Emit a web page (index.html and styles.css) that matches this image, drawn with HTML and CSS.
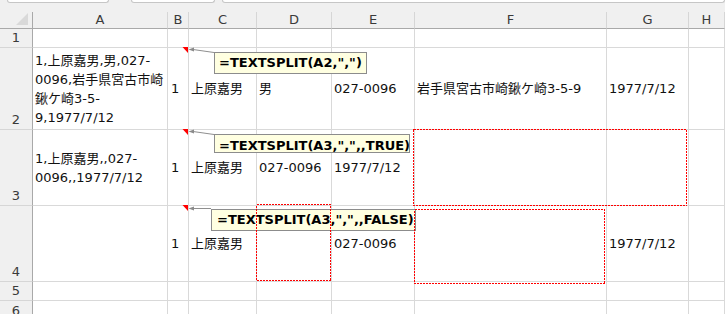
FILE: index.html
```html
<!DOCTYPE html>
<html lang="ja">
<head>
<meta charset="utf-8">
<title>TEXTSPLIT</title>
<link rel="stylesheet" href="styles.css">
</head>
<body>
<div class="app">
  <div class="topbar">
    <div class="tb tb-name"></div>
    <div class="tb tb-fx"></div>
    <div class="tb tb-formula"></div>
  </div>
  <div class="sheet">
    <div class="corner"><svg width="33" height="16" viewBox="0 0 33 16"><polygon points="28,1 28,13 16,13" fill="#d9d9d9"/></svg></div>
    <div class="ch">A</div><div class="ch">B</div><div class="ch">C</div><div class="ch">D</div><div class="ch">E</div><div class="ch">F</div><div class="ch">G</div><div class="ch">H</div>

    <div class="rh">1</div>
    <div class="cell"></div><div class="cell"></div><div class="cell"></div><div class="cell"></div><div class="cell"></div><div class="cell"></div><div class="cell"></div><div class="cell"></div>

    <div class="rh">2</div>
    <div class="cell wrap">1,上原嘉男,男,027-<br>0096,岩手県宮古市崎<br>鍬ケ崎3-5-<br>9,1977/7/12</div>
    <div class="cell num">1</div>
    <div class="cell">上原嘉男</div>
    <div class="cell">男</div>
    <div class="cell">027-0096</div>
    <div class="cell">岩手県宮古市崎鍬ケ崎3-5-9</div>
    <div class="cell">1977/7/12</div>
    <div class="cell"></div>

    <div class="rh">3</div>
    <div class="cell wrap">1,上原嘉男,,027-<br>0096,,1977/7/12</div>
    <div class="cell num">1</div>
    <div class="cell">上原嘉男</div>
    <div class="cell">027-0096</div>
    <div class="cell">1977/7/12</div>
    <div class="cell"></div>
    <div class="cell"></div>
    <div class="cell"></div>

    <div class="rh">4</div>
    <div class="cell"></div>
    <div class="cell num">1</div>
    <div class="cell">上原嘉男</div>
    <div class="cell"></div>
    <div class="cell">027-0096</div>
    <div class="cell"></div>
    <div class="cell">1977/7/12</div>
    <div class="cell"></div>

    <div class="rh">5</div>
    <div class="cell"></div><div class="cell"></div><div class="cell"></div><div class="cell"></div><div class="cell"></div><div class="cell"></div><div class="cell"></div><div class="cell"></div>

    <div class="rh">6</div>
    <div class="cell"></div><div class="cell"></div><div class="cell"></div><div class="cell"></div><div class="cell"></div><div class="cell"></div><div class="cell"></div><div class="cell"></div>
  </div>

  <div class="callout c1">=TEXTSPLIT(A2,",")</div>
  <div class="callout c2">=TEXTSPLIT(A3,",",,TRUE)</div>
  <div class="callout c3">=TEXTSPLIT(A3,",",,FALSE)</div>

  <svg class="overlay" width="725" height="314" viewBox="0 0 725 314">
    <g fill="#ff0000">
      <polygon points="182.5,47 188,47 188,53"/>
      <polygon points="182.5,129 188,129 188,135"/>
      <polygon points="182.5,205 188,205 188,211"/>
    </g>
    <g stroke="#8f8f8f" stroke-width="1" fill="none">
      <line x1="193" y1="49.5" x2="214" y2="52.5"/>
      <line x1="193" y1="131.5" x2="214" y2="134.5"/>
      <line x1="193" y1="208.5" x2="211" y2="208.5"/>
    </g>
    <g fill="#8a8a8a">
      <polygon points="188.5,49.5 194,47.5 194,51.5"/>
      <polygon points="188.5,131.5 194,129.5 194,133.5"/>
      <polygon points="188.5,208.5 194,206.5 194,210.5"/>
    </g>
    <g stroke="#ff0000" stroke-width="1" fill="none" stroke-dasharray="2 1" shape-rendering="crispEdges">
      <rect x="413.5" y="129.5" width="273" height="76"/>
      <rect x="414.5" y="209.5" width="190" height="74"/>
      <rect x="256.5" y="204.5" width="74" height="76"/>
    </g>
  </svg>
</div>
</body>
</html>
```

FILE: styles.css
```css
html, body {
  margin: 0;
  padding: 0;
  background: #f0f0f0;
}

.app {
  position: relative;
  width: 725px;
  height: 314px;
  overflow: hidden;
  font-family: "DejaVu Sans", "Noto Sans CJK JP", sans-serif;
  font-size: 13px;
  color: #000;
}

.topbar {
  height: 12px;
  display: flex;
  align-items: flex-start;
}

.tb {
  height: 2px;
  background: #fff;
  border: 1px solid #c6c6c6;
  border-top: none;
  border-radius: 0 0 4px 4px;
}

.tb-name { width: 100px; margin-left: 7px; }
.tb-fx { width: 82px; margin-left: 22px; }
.tb-formula { flex: 1; margin-left: 7px; }

.sheet {
  display: grid;
  grid-template-columns: 33px 135px 21px 68px 75px 83px 192px 82px 1fr;
  grid-template-rows: 17px 19px 82px 76px 76px 19px 20px;
}

.sheet > div {
  box-sizing: border-box;
}

.corner {
  background: #f0f0f0;
  border-right: 1px solid #a9a9a9;
  border-bottom: 1px solid #a9a9a9;
  line-height: 0;
}

.ch {
  background: #f0f0f0;
  border-right: 1px solid #d6d6d6;
  border-bottom: 1px solid #a9a9a9;
  display: flex;
  align-items: center;
  justify-content: center;
  color: #3a3a3a;
  line-height: 16px;
}

.rh {
  background: #f0f0f0;
  border-right: 1px solid #a9a9a9;
  border-bottom: 1px solid #d6d6d6;
  display: flex;
  align-items: flex-end;
  justify-content: center;
  color: #3a3a3a;
  line-height: 18px;
}

.cell {
  background: #fff;
  border-right: 1px solid #d9d9d9;
  border-bottom: 1px solid #d9d9d9;
  display: flex;
  align-items: center;
  padding-left: 2px;
  white-space: nowrap;
  line-height: 19px;
  color: #111;
}

.cell.num {
  padding-left: 3px;
}

.callout {
  position: absolute;
  box-sizing: border-box;
  background: #ffffe1;
  border: 1px solid #8c8c8c;
  font-family: "DejaVu Sans", sans-serif;
  font-weight: bold;
  font-size: 13px;
  line-height: 20px;
  white-space: nowrap;
  color: #000;
  padding-left: 4px;
  overflow: hidden;
}

.c1 { left: 214px; top: 52px; width: 153px; height: 22px; }
.c2 { left: 214px; top: 134px; width: 196px; height: 19px; padding-top: 1px; }
.c3 { left: 211px; top: 209px; width: 205px; height: 22px; padding-left: 5px; }

.overlay {
  position: absolute;
  left: 0;
  top: 0;
  pointer-events: none;
}
```
